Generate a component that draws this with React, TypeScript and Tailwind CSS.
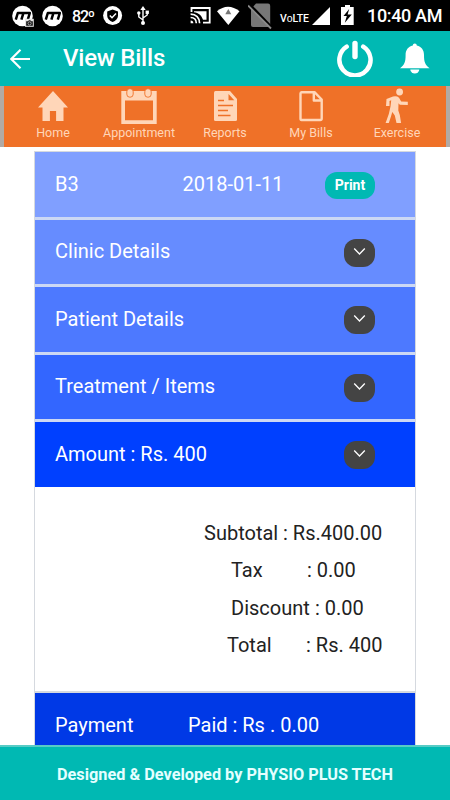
import React from "react";

function MotoIcon({ camera = false }: { camera?: boolean }) {
  return (
    <svg className="h-[24px] w-[24px] shrink-0" viewBox="0 0 24 24">
      <circle cx="10.5" cy="11" r="10.3" fill="#fff" />
      <path d="M3.8 14.6 5.8 8h12l-2 6.6M11.4 8.2l-2 6.4" fill="none" stroke="#000" strokeWidth="2.5" strokeLinejoin="round" />
      {camera && (
        <g>
          <rect x="13" y="13.8" width="8.8" height="8" fill="#e4e4e4" />
          <path d="M14.2 16.2h2l.6-1h1.6l.6 1h1.8v4.6h-6.6z" fill="#111" />
          <circle cx="17.6" cy="18.4" r="1.6" fill="none" stroke="#ddd" strokeWidth=".7" />
        </g>
      )}
    </svg>
  );
}

function StatusBar() {
  return (
    <div className="flex h-[31px] w-full shrink-0 items-start bg-black text-white">
      <div className="ml-[12px] mt-[5px] flex w-[60px] gap-[6px]">
        <MotoIcon camera />
        <MotoIcon />
      </div>
      <span className="mt-[7px] w-[31px] whitespace-nowrap text-[16px] leading-[20px] font-medium tracking-[-1.2px]">82º</span>
      <svg className="mt-[6px] h-[20px] w-[20px] shrink-0" viewBox="0 0 20 20">
        <circle cx="9.6" cy="9.6" r="9.5" fill="#fff" />
        <path d="M9.6 3.6 15 5.5v4.3c0 3-2.3 5-5.4 6.2-3.1-1.2-5.4-3.2-5.4-6.2V5.5z" fill="#000" />
        <path d="m6.8 9.5 2.2 2.2 4-4.2" fill="none" stroke="#fff" strokeWidth="1.5" />
      </svg>
      <svg className="ml-[14px] mt-[6px] h-[20px] w-[13px] shrink-0" viewBox="0 0 13 20">
        <path d="M6 17V3M6 14 1.8 11V7.5M6 12l4.2-3V6" fill="none" stroke="#fff" strokeWidth="1.4" />
        <path d="M6 0 8.7 4H3.3z" fill="#fff" />
        <circle cx="6" cy="17" r="2" fill="#fff" />
        <circle cx="1.8" cy="7" r="1.7" fill="#fff" />
        <rect x="8.6" y="4.6" width="3.3" height="3.3" fill="#fff" />
      </svg>
      <svg className="ml-[40px] mt-[7px] h-[18px] w-[22px] shrink-0" viewBox="0 0 22 18">
        <path d="M1.5 5V1h18.2v14.6H13" fill="none" stroke="#fff" strokeWidth="1.8" />
        <path d="M4 4.2h12.5v8.6H13C11.500 8 8.500 5.800 4 5.200z" fill="#fff" />
        <path d="M.6 7.200c5.400 0 9 3.600 9 9M.6 10.500c3.500 0 5.700 2.200 5.700 5.700" fill="none" stroke="#fff" strokeWidth="1.7" />
        <path d="M.6 13.400c1.800 0 2.800 1 2.800 2.900H.6z" fill="#fff" />
      </svg>
      <svg className="ml-[5px] mt-[6px] h-[20px] w-[24px] shrink-0" viewBox="0 0 24 20">
        <path d="M0 5.300C7-.8 15-.8 22.500 5.300L11.300 19z" fill="#fff" />
        <path d="m11.300 3 3 5.200H8.300z" fill="#777" />
      </svg>
      <svg className="ml-[7px] mt-[3px] h-[27px] w-[25px] shrink-0" viewBox="0 0 25 27">
        <path d="M8 .5h12q2.200 0 2.200 2.200V22q0 2-2 2H5q-2 0-2-2V6z" fill="#777" />
        <path d="M1.500 1.500 23.500 24.500" stroke="#000" strokeWidth="3" />
        <path d="m0 2.500 23 23" stroke="#8a8a8a" strokeWidth="1.800" />
      </svg>
      <span className="ml-[7px] mt-[11px] w-[32px] whitespace-nowrap text-[10.5px] leading-[16px] font-medium tracking-[-0.1px]">VᴏLTE</span>
      <svg className="mt-[6px] h-[20px] w-[19px] shrink-0" viewBox="0 0 19 20">
        <path d="M18 1v18H0z" fill="#fff" />
      </svg>
      <svg className="ml-[10px] mt-[5px] h-[21px] w-[14px] shrink-0" viewBox="0 0 14 21">
        <path d="M4 0h5v2h3.700v18H0V2h4z" fill="#fff" />
        <path d="m8.200 4-5.700 7h3.300l-2 6.800 7-8.300H6.600z" fill="#000" />
      </svg>
      <span className="ml-[12px] mt-[5px] whitespace-nowrap text-[18px] leading-[22px] font-medium tracking-[-0.35px]">10:40 AM</span>
    </div>
  );
}

function Header() {
  return (
    <header className="flex h-[55px] shrink-0 items-start bg-[#00b9b3] text-white">
      <svg className="ml-[10px] mt-[18px] h-[20px] w-[21px] shrink-0" viewBox="0 0 21 20">
        <path d="M20 10H1.500M10.500.8 1.300 10l9.200 9.200" fill="none" stroke="#fff" strokeWidth="2.100" />
      </svg>
      <h1 className="ml-[32px] mt-[12px] w-[274px] whitespace-nowrap text-[24px] leading-[30px] font-medium tracking-[-0.2px]">View Bills</h1>
      <svg className="mt-[9px] h-[37px] w-[37px] shrink-0" viewBox="0 0 37 37">
        <path d="M9.700 6.600a15.600 15.600 0 1 0 16.500 0" fill="none" stroke="#fff" strokeWidth="4.500" strokeLinecap="round" />
        <path d="M18 3.500v13" stroke="#fff" strokeWidth="5.400" strokeLinecap="round" />
      </svg>
      <svg className="ml-[26px] mt-[12px] h-[32px] w-[30px] shrink-0" viewBox="0 0 30 32">
        <path d="M12.800 2.500a2 2 0 0 1 4 0C21.500 3.800 24 7 24 12c0 7.500 1.200 9.600 5.600 13.200H0C4.400 21.600 5.600 19.500 5.600 12c0-5 2.500-8.200 7.200-9.500z" fill="#fff" />
        <path d="M10.300 26.500h9a4.500 4 0 0 1-9 0z" fill="#fff" />
      </svg>
    </header>
  );
}

const peach = "#ffd6b8";

const navItems = [
  {
    label: "Home",
    icon: (
      <svg className="h-[36px] w-[36px]" viewBox="0 0 36 36">
        <path d="M18 3 33 19.500h-4.500V33h-7.400V23h-6.200v10H7.500V19.500H3z" fill={peach} />
      </svg>
    ),
  },
  {
    label: "Appointment",
    icon: (
      <svg className="h-[36px] w-[36px]" viewBox="0 0 36 36">
        <path fillRule="evenodd" d="M.3 3h35.400v33H.3zM4 12.500v19.700h28V12.500z" fill={peach} />
        <rect x="5.800" y=".700" width="6.400" height="8.500" rx="3" fill={peach} stroke="#ef7128" strokeWidth=".9" />
        <rect x="23.800" y=".700" width="6.400" height="8.500" rx="3" fill={peach} stroke="#ef7128" strokeWidth=".9" />
      </svg>
    ),
  },
  {
    label: "Reports",
    icon: (
      <svg className="h-[36px] w-[36px]" viewBox="0 0 36 36">
        <path d="M8.500 3H23l7 8v20.500Q30 33 28.500 33h-20Q7 33 7 31.500v-27Q7 3 8.500 3z" fill={peach} />
        <path d="M21.500 6v6.300h5.800" fill="#ef7128" />
        <path d="M11 12.500h6M11 17.500h15M11 22.500h10M11 27.500h12.500" stroke="#ef7128" strokeWidth="1.300" />
      </svg>
    ),
  },
  {
    label: "My Bills",
    icon: (
      <svg className="h-[36px] w-[36px]" viewBox="0 0 36 36">
        <path d="M8.500 4.200h13l7.200 7.300v19q0 1.500-1.500 1.500H8.500Q7.500 32 7.500 30.500v-25q0-1.300 1-1.300zM20.800 4.500v8h7.700" fill="none" stroke={peach} strokeWidth="2.400" strokeLinejoin="round" />
      </svg>
    ),
  },
  {
    label: "Exercise",
    icon: (
      <svg className="h-[36px] w-[36px]" viewBox="0 0 36 36">
        <circle cx="20.600" cy="4" r="3.400" fill={peach} />
        <path d="M7.500 11 14 8.500q4-.8 6 1.200l2.200 3.800 6.600.3v3.200l-8-.3-1.300-1.500-.2 7.300 1.500 4.500 1.300 8h-4.600l-1.700-7.500-2.500-3.500-1.500 5-2 6H6.600l3.200-9 1.700-7.500.7-6.300-1.700.7v5H7z" fill={peach} />
      </svg>
    ),
  },
];

function NavBar() {
  return (
    <nav className="grid h-[61px] shrink-0 grid-cols-[86px_86px_86px_86px_86px] border-x-4 border-[#b1aaa5] bg-[#ef7128] pl-[6px]">
      {navItems.map((item) => (
        <div key={item.label} className="flex flex-col items-center pt-[2px]">
          {item.icon}
          <span className="mt-[1px] whitespace-nowrap text-[12.5px] leading-[16px] text-[#ffd6b8]">{item.label}</span>
        </div>
      ))}
    </nav>
  );
}

function Chevron() {
  return (
    <button className="mt-[3px] flex h-[28px] w-[31px] items-start justify-center rounded-[12px] bg-[#444]">
      <svg className="mt-[8px] h-[10px] w-[13px]" viewBox="0 0 13 10">
        <path d="m1.200 1.500 5.300 5.500L11.800 1.500" fill="none" stroke="#fff" strokeWidth="1.300" />
      </svg>
    </button>
  );
}

const sections = [
  { title: "Clinic Details", style: "h-[67px] border-b-[3px] bg-[#668cff]", offset: "mt-[3px]" },
  { title: "Patient Details", style: "h-[68px] border-b-[3px] bg-[#4d79ff]", offset: "mt-[4px]" },
  { title: "Treatment / Items", style: "h-[67px] border-b-[3px] bg-[#3366ff]", offset: "mt-[3px]" },
  { title: "Amount : Rs. 400", style: "h-[65px] bg-[#0040ff]", offset: "mt-[4px]" },
];

const totals = [
  { label: "Subtotal", value: ": Rs.400.00", pad: "pl-[169px]", width: "w-[79px]" },
  { label: "Tax", value: ": 0.00", pad: "pl-[196px]", width: "w-[76px]" },
  { label: "Discount", value: ": 0.00", pad: "pl-[196px]", width: "w-[84px]" },
  { label: "Total", value: ": Rs. 400", pad: "pl-[192px]", width: "w-[79px]" },
];

export default function App() {
  return (
    <div className="flex h-[800px] w-[450px] flex-col overflow-hidden bg-white font-['Roboto',sans-serif]">
      <StatusBar />
      <Header />
      <NavBar />
      <main className="min-h-0 flex-1 overflow-hidden pl-[34px] pt-[4px]">
        <div className="w-[382px] border border-[#d5d9df] text-[20px] leading-[24px] text-white">
          <div className="flex h-[68px] items-start border-b-[3px] border-[#ccd8f4] bg-[#809fff] pl-[20px] pr-[40px] pt-[20px]">
            <span className="w-[127.5px]">B3</span>
            <span className="whitespace-nowrap">2018-01-11</span>
            <button className="ml-auto h-[27px] w-[50px] rounded-[12px] bg-[#00b9b3] pb-px text-[14px] leading-[26px] font-bold">Print</button>
          </div>
          {sections.map((s) => (
            <div key={s.title} className={`flex items-start justify-between border-[#ccd8f4] pl-[20px] pr-[40px] pt-[16px] ${s.style}`}>
              <span className={`whitespace-nowrap ${s.offset}`}>{s.title}</span>
              <Chevron />
            </div>
          ))}
          <div className="flex h-[206px] flex-col gap-[13.4px] border-b-2 border-[#d5d9df] bg-white pt-[34px] text-[#222]">
            {totals.map((t) => (
              <div key={t.label} className={`flex whitespace-nowrap ${t.pad}`}>
                <span className={t.width}>{t.label}</span>
                <span>{t.value}</span>
              </div>
            ))}
          </div>
          <div className="flex h-[67px] bg-[#0039e6] pl-[20px] pt-[20px]">
            <span className="w-[133px]">Payment</span>
            <span>Paid : Rs . 0.00</span>
          </div>
        </div>
      </main>
      <footer className="h-[55px] shrink-0 border-t-2 border-[#58cbc5] bg-[#00b9b3] pt-[18px] text-center text-[16.3px] leading-[20px] font-bold text-[#e4ffff]">
        Designed &amp; Developed by PHYSIO PLUS TECH
      </footer>
    </div>
  );
}
